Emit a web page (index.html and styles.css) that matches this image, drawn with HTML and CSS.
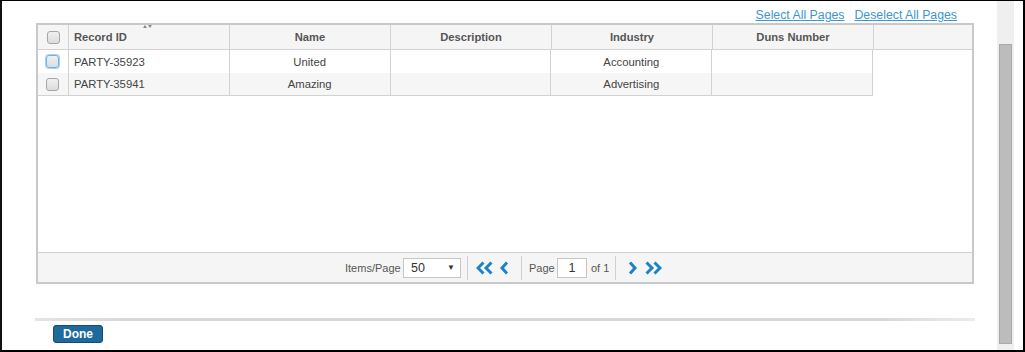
FILE: index.html
```html
<!DOCTYPE html>
<html>
<head>
<meta charset="utf-8">
<link rel="stylesheet" href="styles.css">
</head>
<body>
<div class="frame">
  <div class="main">
    <div class="links">
      <a class="link" href="#">Select All Pages</a>
      <a class="link" href="#">Deselect All Pages</a>
    </div>
    <div class="grid">
      <div class="head">
        <div class="hc cb"><span class="chk"></span></div>
        <div class="hc left sortable">Record ID
          <svg class="sort" width="10" height="5" viewBox="0 0 10 5"><path d="M0 4 L2 1 L4 4Z" fill="#888"/><path d="M5 1 L9 1 L7 4Z" fill="#888"/></svg>
        </div>
        <div class="hc">Name</div>
        <div class="hc">Description</div>
        <div class="hc">Industry</div>
        <div class="hc">Duns Number</div>
        <div class="hc filler"></div>
      </div>
      <div class="rows">
        <div class="row">
          <div class="c cb"><span class="chk focus"></span></div>
          <div class="c left">PARTY-35923</div>
          <div class="c">United</div>
          <div class="c"></div>
          <div class="c">Accounting</div>
          <div class="c"></div>
        </div>
        <div class="row alt">
          <div class="c cb"><span class="chk"></span></div>
          <div class="c left">PARTY-35941</div>
          <div class="c">Amazing</div>
          <div class="c"></div>
          <div class="c">Advertising</div>
          <div class="c"></div>
        </div>
      </div>
      <div class="spacer"></div>
      <div class="pager">
        <span class="plabel items">Items/Page</span>
        <div class="select"><span>50</span><span class="arrow">&#9660;</span></div>
        <span class="sep s1"></span>
        <svg class="nav n1" width="18" height="14" viewBox="0 0 18 14"><path d="M7.5 1.5 L2 7 L7.5 12.5" stroke="#1b84c6" stroke-width="3" fill="none"/><path d="M15.5 1.5 L10 7 L15.5 12.5" stroke="#1b84c6" stroke-width="3" fill="none"/></svg>
        <svg class="nav n2" width="10" height="14" viewBox="0 0 10 14"><path d="M8 1.5 L3 7 L8 12.5" stroke="#1b84c6" stroke-width="3" fill="none"/></svg>
        <span class="sep s2"></span>
        <span class="plabel page">Page</span>
        <div class="pinput">1</div>
        <span class="plabel of">of 1</span>
        <span class="sep s3"></span>
        <svg class="nav n3" width="10" height="14" viewBox="0 0 10 14"><path d="M2 1.5 L7 7 L2 12.5" stroke="#1b84c6" stroke-width="3" fill="none"/></svg>
        <svg class="nav n4" width="18" height="14" viewBox="0 0 18 14"><path d="M2.5 1.5 L8 7 L2.5 12.5" stroke="#1b84c6" stroke-width="3" fill="none"/><path d="M10.5 1.5 L16 7 L10.5 12.5" stroke="#1b84c6" stroke-width="3" fill="none"/></svg>
      </div>
    </div>
    <div class="rule"></div>
    <button class="done">Done</button>
  </div>
  <div class="track"><div class="thumb"></div></div>
  <div class="gutter"></div>
</div>
</body>
</html>
```

FILE: styles.css
```css
html, body {
  margin: 0;
  padding: 0;
  background: #fff;
}
body {
  font-family: "Liberation Sans", Arial, sans-serif;
}
.frame {
  width: 1025px;
  height: 352px;
  box-sizing: border-box;
  border-top: 1px solid #000;
  border-left: 2px solid #111;
  border-right: 2px solid #000;
  border-bottom: 2px solid #000;
  display: flex;
}
.main {
  width: 995px;
  display: flex;
  flex-direction: column;
}
.links {
  height: 22px;
  display: flex;
  justify-content: flex-end;
  align-items: flex-end;
  gap: 10px;
  padding-right: 40px;
}
.link {
  font-size: 12.3px;
  line-height: 15px;
  color: #3b97d3;
  text-decoration: underline;
}
.grid {
  margin-left: 34px;
  width: 938px;
  height: 261px;
  box-sizing: border-box;
  border: 2px solid #c9c9c9;
  display: flex;
  flex-direction: column;
}
.head {
  display: flex;
  height: 24px;
  background: #f5f5f5;
  border-bottom: 1px solid #d2d2d2;
}
.hc {
  width: 160px;
  border-right: 1px solid #d2d2d2;
  font-size: 11.2px;
  font-weight: bold;
  color: #555;
  display: flex;
  align-items: center;
  justify-content: center;
  position: relative;
}
.hc.cb, .c.cb {
  width: 30px;
}
.hc.left, .c.left {
  justify-content: flex-start;
  padding-left: 5px;
  width: 155px;
}
.hc.filler {
  flex: 1;
  border-right: none;
}
.sort {
  position: absolute;
  left: 74px;
  top: -1px;
}
.rows {
  width: 835px;
  border-bottom: 1px solid #d2d2d2;
}
.row {
  display: flex;
  height: 23px;
  background: #fff;
}
.row.alt {
  height: 22px;
  background: #f6f6f6;
}
.c {
  width: 160px;
  border-right: 1px solid #d2d2d2;
  font-size: 11.3px;
  color: #444;
  display: flex;
  align-items: center;
  justify-content: center;
}
.chk {
  display: block;
  width: 11px;
  height: 11px;
  border: 1px solid #a6a6a6;
  border-radius: 3px;
  background: linear-gradient(#f0f0f0, #dcdcdc);
}
.chk.focus {
  border-color: #6fb2e6;
  box-shadow: 0 0 0 1px #a9d3f3;
}
.spacer {
  flex: 1;
}
.pager {
  height: 29px;
  border-top: 1px solid #d2d2d2;
  background: #f5f5f5;
  display: flex;
  align-items: center;
  justify-content: flex-start;
  padding-left: 307px;
  font-size: 11px;
  color: #555;
}
.plabel {
  white-space: nowrap;
}
.items {
  width: 55px;
  margin-right: 3px;
}
.select {
  box-sizing: border-box;
  width: 58px;
  height: 20px;
  border: 1px solid #c6c6c6;
  background: #fff;
  display: flex;
  align-items: center;
  justify-content: space-between;
  padding: 0 5px 0 7px;
  font-size: 12.5px;
  color: #333;
}
.arrow {
  font-size: 8px;
  color: #333;
}
.sep {
  width: 1px;
  height: 24px;
  background: #d0d0d0;
}
.s1 {
  margin: 0 8px 0 6px;
}
.nav {
  display: block;
}
.n2 {
  margin-left: 5px;
}
.s2 {
  margin: 0 7px 0 12px;
}
.page {
  width: 24px;
  margin-right: 4px;
}
.pinput {
  box-sizing: border-box;
  width: 30px;
  height: 20px;
  border: 1px solid #c6c6c6;
  background: #fff;
  text-align: center;
  line-height: 18px;
  font-size: 12.5px;
  color: #333;
  margin-right: 4px;
}
.of {
  width: 19px;
}
.s3 {
  margin: 0 12px 0 5px;
}
.n4 {
  margin-left: 6px;
}
.rule {
  margin-top: 34px;
  margin-left: 33px;
  width: 940px;
  height: 3px;
  background: linear-gradient(to right, #e4e4e4, #d8d8d8 10%, #d8d8d8 90%, #ececec);
}
.done {
  margin-top: 4px;
  margin-left: 51px;
  width: 50px;
  height: 18px;
  padding: 0;
  border: 1px solid #174b6e;
  border-radius: 3px;
  background: #1f6a9d;
  color: #fff;
  font-family: "Liberation Sans", Arial, sans-serif;
  font-size: 12px;
  font-weight: bold;
  line-height: 16px;
}
.track {
  width: 17px;
  background: #efefef;
  display: flex;
  flex-direction: column;
  align-items: center;
}
.thumb {
  margin-top: 43px;
  width: 13px;
  height: 300px;
  box-sizing: border-box;
  background: #bcbcbc;
  border: 1px solid #a9a9a9;
}
.gutter {
  width: 9px;
}
```
